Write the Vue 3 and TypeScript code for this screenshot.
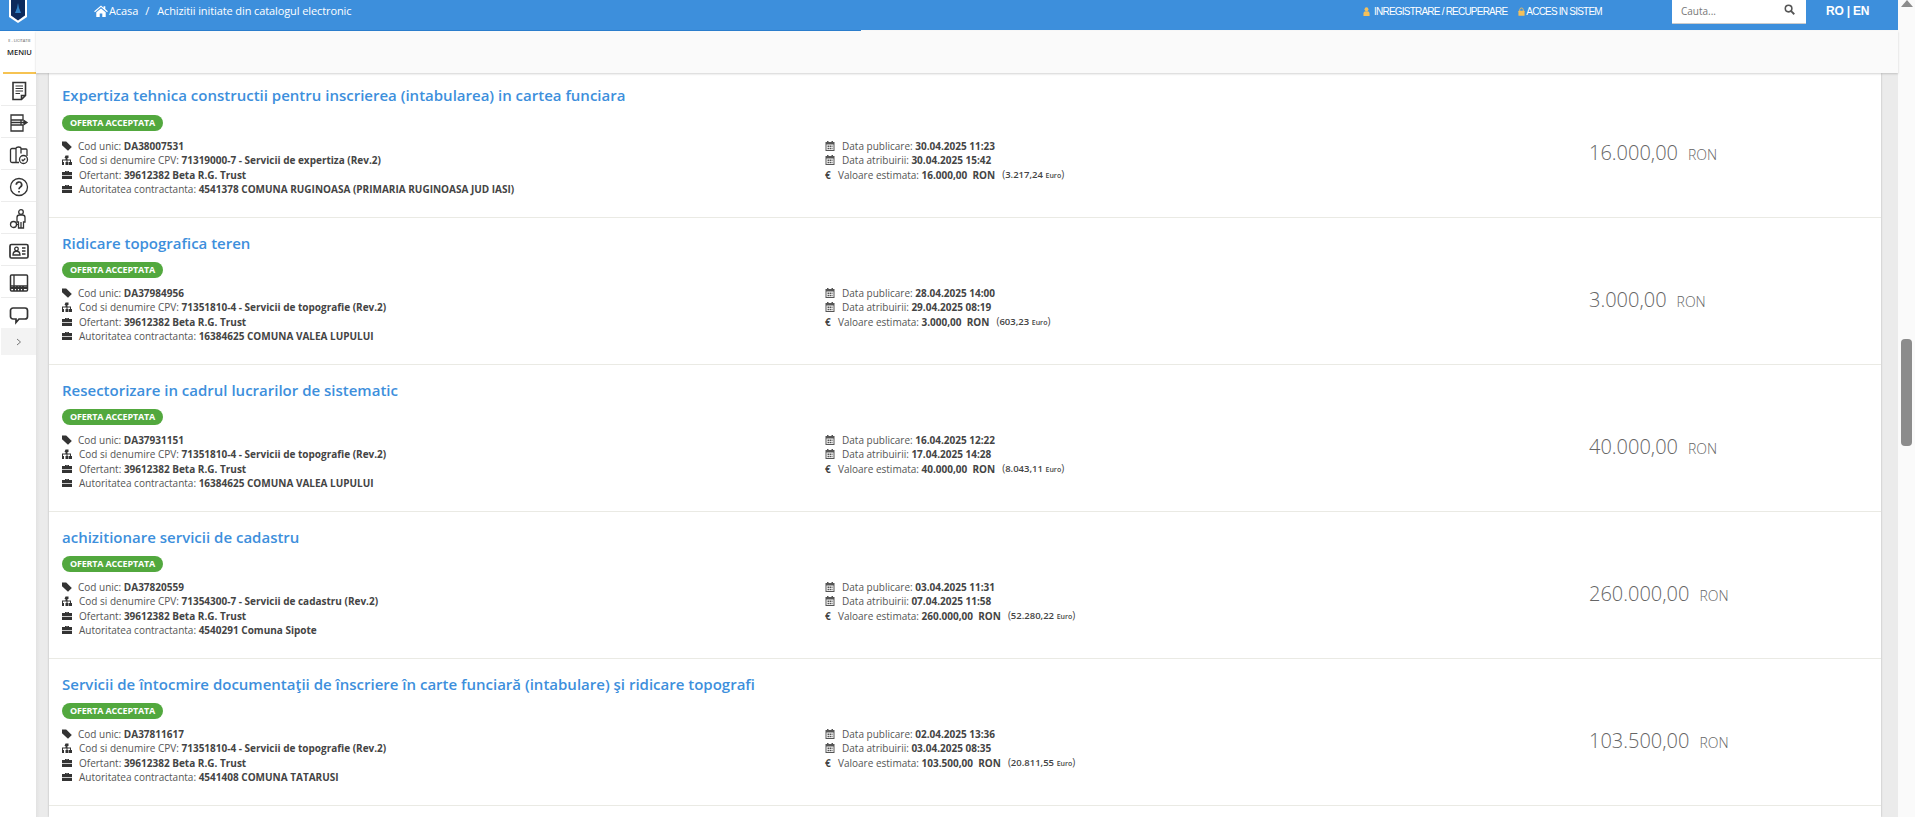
<template>
  <div class="page">
    <div class="main">
      <header class="topbar">
        <div class="logo-wrap">
          <svg class="logo" viewBox="0 0 18 23">
            <path d="M0 0h18v17l-9 6-9-6z" fill="#fff" />
            <path d="M2 0h14v15.6l-7 4.8-7-4.8z" fill="#0d2a5c" />
            <path d="M9 3l1 5 2 5H6l2-5z" fill="#2f7fc4" />
          </svg>
        </div>
        <nav class="crumbs">
          <svg class="home" viewBox="0 0 16 14"><path d="M8 0.500l3 2.600V1.500h2v3.300l3 2.600-.9 1L8 2.400 0.900 8.400 0 7.400zM2.500 8.600L8 4l5.500 4.600V14h-4v-4h-3v4h-4z" fill="#fff" /></svg>
          <span>Acasa</span>
          <span class="sep">/</span>
          <span>Achizitii initiate din catalogul electronic</span>
        </nav>
        <div class="auth">
          <span class="auth-link">
            <svg class="auth-icon" viewBox="0 0 8 10"><circle cx="4" cy="2.400" r="2.200" fill="#f5c05a" /><path d="M0.500 10V7a2.500 2.500 0 0 1 2.500-2.300h2A2.500 2.500 0 0 1 7.500 7v3z" fill="#f5c05a" /></svg>
            INREGISTRARE / RECUPERARE
          </span>
          <span class="auth-link auth-link-lock">
            <svg class="auth-icon" viewBox="0 0 8 10"><path d="M2 4.500V3a2 2 0 0 1 4 0v1.500" fill="none" stroke="#f5c05a" stroke-width="1" /><rect x="0.500" y="4.200" width="7" height="5.600" rx="0.600" fill="#f5c05a" /></svg>
            ACCES IN SISTEM
          </span>
        </div>
        <div class="search">
          <span>Cauta...</span>
          <svg class="search-icon" viewBox="0 0 12 12"><circle cx="5" cy="5" r="3.600" fill="none" stroke="#555" stroke-width="1.700" /><path d="M7.800 7.800l3.400 3.400" stroke="#555" stroke-width="2" /></svg>
        </div>
        <div class="lang">RO | EN</div>
      </header>
      <div class="body">
        <aside class="sidebar">
          <div class="brand">
            <span class="brand-small">E - LICITATIE</span>
            <span class="brand-menu">MENIU</span>
          </div>
          <div class="side-item">
            <svg class="side-icon" viewBox="0 0 20 20"><path d="M4 1.500h12.500v13l-4 4H4zM12.500 18.500v-4h4" stroke-width="1.600" /><path d="M6.500 5h7.500M6.500 7.500h7.500M6.500 10h7.500M6.500 12.500h4.500" stroke-width="1.200" /></svg>
          </div>
          <div class="side-item">
            <svg class="side-icon" viewBox="0 0 20 20"><path d="M2 2h12v5H2zM2 7h10v5H2zM2 12h12v6H2zM2 9.500h14" /><path d="M15 7.500l3 2-3 2z" fill="#333" /></svg>
          </div>
          <div class="side-item">
            <svg class="side-icon" viewBox="0 0 20 20"><path d="M7 3.500H3a1.500 1.500 0 0 0-1.500 1.500v11A1.500 1.500 0 0 0 3 17.500h7M7 3.500v14M7 3.500c0-2 5-2 5 0v5M12 4h5a1 1 0 0 1 1 1v6" /><circle cx="14.500" cy="14.500" r="4" /><path d="M12.700 14.500l1.300 1.400 2.300-2.400" /></svg>
          </div>
          <div class="side-item">
            <svg class="side-icon" viewBox="0 0 20 20"><circle cx="10" cy="10" r="8.500" /><path d="M7.300 7.800a2.700 2.700 0 1 1 4 2.300c-.9.600-1.300 1-1.300 2.200M10 14v1.500" stroke-width="1.700" /></svg>
          </div>
          <div class="side-item">
            <svg class="side-icon" viewBox="0 0 20 20"><circle cx="12" cy="3" r="2.300" /><path d="M8 13V8.500a2.500 2.500 0 0 1 2.500-2.500h3a2.500 2.500 0 0 1 2.500 2.500V13h-1.500v6h-5v-6zM12 13v6" /><circle cx="4.500" cy="15.500" r="3" /><path d="M7.500 15.500H10" /></svg>
          </div>
          <div class="side-item">
            <svg class="side-icon" viewBox="0 0 20 20"><rect x="1" y="3.500" width="18" height="13.500" rx="1.500" stroke-width="1.700" /><circle cx="7.500" cy="8" r="1.800" /><path d="M4 14c0-5 7-5 7 0zM13 7h3.500M13 10h3.500M13 13h3.500" /></svg>
          </div>
          <div class="side-item">
            <svg class="side-icon" viewBox="0 0 20 20"><rect x="1.500" y="2" width="17" height="16" rx="1" stroke-width="1.500" /><path d="M5 2v11M1.500 13h17" /><path d="M2 15h16M5 13v5M8 13v5M11 13v5M14 13v5" stroke-width="1.800" /></svg>
          </div>
          <div class="side-item side-item-last">
            <svg class="side-icon" viewBox="0 0 20 20"><path d="M4 3h12a2.500 2.500 0 0 1 2.500 2.500v6A2.500 2.500 0 0 1 16 14h-6l-3 3.500V14H4a2.500 2.500 0 0 1-2.500-2.500v-6A2.500 2.500 0 0 1 4 3z" stroke-width="1.700" /></svg>
          </div>
          <div class="side-toggle">
            <svg viewBox="0 0 6 8" class="chevron"><path d="M1 1l3.500 3L1 7" fill="none" stroke="#777" stroke-width="1" /></svg>
          </div>
        </aside>
        <div class="content">
          <div class="subbar"></div>
          <div class="gutter">
            <section class="list">
              <article v-for="row in rows" :key="row.code" class="row">
                <h2 class="title">{{ row.title }}</h2>
                <div class="badge">OFERTA ACCEPTATA</div>
                <div class="columns">
                  <div class="col-left">
                    <p class="line">
                      <svg class="ico" viewBox="0 0 10 10"><path d="M0 0.500h4.200L9.800 6 6 9.800 0 4.200z" fill="#333" /></svg>
                      <span class="gap-tag">Cod unic: <b>{{ row.code }}</b></span>
                    </p>
                    <p class="line">
                      <svg class="ico" viewBox="0 0 10 10"><path d="M3.500 0.500h3v2.500h-1v1.500h3.500V7h1v3h-3V7h1V5.500H5.500V7h1v3h-3V7h1V5.500H1V7h1v3h-3V7h1V4.500h3.500V3h-1z" fill="#333" /></svg>
                      <span class="gap">Cod si denumire CPV: <b>{{ row.cpv }}</b></span>
                    </p>
                    <p class="line">
                      <svg class="ico" viewBox="0 0 10 10"><path d="M3 2V1h4v1h3v3H0V2zM4 2h2V1.800H4zM0 5.800h10V9H0z" fill="#333" /></svg>
                      <span class="gap">Ofertant: <b>39612382 Beta R.G. Trust</b></span>
                    </p>
                    <p class="line">
                      <svg class="ico" viewBox="0 0 10 10"><path d="M3 2V1h4v1h3v3H0V2zM4 2h2V1.800H4zM0 5.800h10V9H0z" fill="#333" /></svg>
                      <span class="gap">Autoritatea contractanta: <b>{{ row.authority }}</b></span>
                    </p>
                  </div>
                  <div class="col-mid">
                    <p class="line">
                      <svg class="ico" viewBox="0 0 10 10"><path fill-rule="evenodd" d="M2 0h1.500v1h3V0H8v1h1.500v9H.5V1H2zM1.500 3.500v5.500h7V3.500zM2.500 4.500h1.500v1.500H2.500zM4.500 4.500h1.500v1.500H4.500zM6.500 4.500h1v1.500h-1zM2.500 6.800h1.500v1.500H2.500zM4.500 6.800h1.500v1.500H4.500zM6.500 6.800h1v1.500h-1z" fill="#555" /></svg>
                      <span class="gap-date">Data publicare: <b>{{ row.published }}</b></span>
                    </p>
                    <p class="line">
                      <svg class="ico" viewBox="0 0 10 10"><path fill-rule="evenodd" d="M2 0h1.500v1h3V0H8v1h1.500v9H.5V1H2zM1.500 3.500v5.500h7V3.500zM2.500 4.500h1.500v1.500H2.500zM4.500 4.500h1.500v1.500H4.500zM6.500 4.500h1v1.500h-1zM2.500 6.800h1.500v1.500H2.500zM4.500 6.800h1.500v1.500H4.500zM6.500 6.800h1v1.500h-1z" fill="#555" /></svg>
                      <span class="gap-date">Data atribuirii: <b>{{ row.awarded }}</b></span>
                    </p>
                    <p class="line">
                      <span class="euro">€</span>
                      <span>Valoare estimata: <b>{{ row.value }}&nbsp; RON</b></span>
                      <span class="eur-value">(<b>{{ row.euro }}</b> <small>Euro</small>)</span>
                    </p>
                  </div>
                  <div class="col-price">
                    <span class="price">{{ row.value }}</span>
                    <span class="currency">RON</span>
                  </div>
                </div>
              </article>
            </section>
          </div>
        </div>
      </div>
    </div>
    <div class="scrollbar">
      <div class="arrow"></div>
      <div class="thumb"></div>
    </div>
  </div>
</template>

<script setup lang="ts">
interface OfferRow {
  title: string
  code: string
  cpv: string
  authority: string
  published: string
  awarded: string
  value: string
  euro: string
}

const rows: OfferRow[] = [
  {
    title: 'Expertiza tehnica constructii pentru inscrierea (intabularea) in cartea funciara',
    code: 'DA38007531',
    cpv: '71319000-7 - Servicii de expertiza (Rev.2)',
    authority: '4541378 COMUNA RUGINOASA (PRIMARIA RUGINOASA JUD IASI)',
    published: '30.04.2025 11:23',
    awarded: '30.04.2025 15:42',
    value: '16.000,00',
    euro: '3.217,24',
  },
  {
    title: 'Ridicare topografica teren',
    code: 'DA37984956',
    cpv: '71351810-4 - Servicii de topografie (Rev.2)',
    authority: '16384625 COMUNA VALEA LUPULUI',
    published: '28.04.2025 14:00',
    awarded: '29.04.2025 08:19',
    value: '3.000,00',
    euro: '603,23',
  },
  {
    title: 'Resectorizare in cadrul lucrarilor de sistematic',
    code: 'DA37931151',
    cpv: '71351810-4 - Servicii de topografie (Rev.2)',
    authority: '16384625 COMUNA VALEA LUPULUI',
    published: '16.04.2025 12:22',
    awarded: '17.04.2025 14:28',
    value: '40.000,00',
    euro: '8.043,11',
  },
  {
    title: 'achizitionare servicii de cadastru',
    code: 'DA37820559',
    cpv: '71354300-7 - Servicii de cadastru (Rev.2)',
    authority: '4540291 Comuna Sipote',
    published: '03.04.2025 11:31',
    awarded: '07.04.2025 11:58',
    value: '260.000,00',
    euro: '52.280,22',
  },
  {
    title: 'Servicii de întocmire documentaţii de înscriere în carte funciară (intabulare) şi ridicare topografi',
    code: 'DA37811617',
    cpv: '71351810-4 - Servicii de topografie (Rev.2)',
    authority: '4541408 COMUNA TATARUSI',
    published: '02.04.2025 13:36',
    awarded: '03.04.2025 08:35',
    value: '103.500,00',
    euro: '20.811,55',
  },
]
</script>

<style>
html,
body {
  margin: 0;
  overflow: hidden;
  background: #fafafa;
}
</style>

<style scoped>
.page {
  display: flex;
  width: 1915px;
  height: 817px;
  overflow: hidden;
  font-family: "Open Sans", "Liberation Sans", sans-serif;
  color: #444;
}

.main {
  flex: 1;
  min-width: 0;
  display: flex;
  flex-direction: column;
}

.topbar {
  height: 30px;
  flex: none;
  display: flex;
  align-items: flex-start;
  background: #3d8fdc;
  color: #fff;
  position: relative;
}

.topbar::after {
  content: "";
  position: absolute;
  left: 0;
  top: 30px;
  width: 861px;
  height: 1px;
  background: #2c7fcf;
}

.logo-wrap {
  width: 94px;
  padding-left: 9px;
  box-sizing: border-box;
}

.logo {
  display: block;
  width: 18px;
  height: 23px;
}

.crumbs {
  display: flex;
  align-items: center;
  width: 1269px;
  height: 21px;
  font-size: 11px;
  letter-spacing: -0.1px;
}

.home {
  width: 14px;
  height: 12px;
  margin-right: 1px;
}

.sep {
  margin: 0 8px 0 7px;
}

.auth {
  display: flex;
  gap: 11px;
  width: 309px;
  height: 22px;
  align-items: center;
  font-family: "Liberation Sans", sans-serif;
  font-size: 10px;
  letter-spacing: -0.78px;
  white-space: nowrap;
}

.auth-link {
  display: flex;
  align-items: center;
  gap: 4px;
}

.auth-link-lock {
  gap: 1px;
}

.auth-icon {
  width: 7px;
  height: 9px;
}

.search {
  width: 134px;
  height: 24px;
  box-sizing: border-box;
  background: #fff;
  border-bottom: 1px solid #ccc;
  color: #777;
  font-size: 10px;
  display: flex;
  align-items: center;
  justify-content: space-between;
  padding: 0 11px 2px 9px;
}

.search-icon {
  width: 11px;
  height: 11px;
  margin-top: -3px;
}

.lang {
  margin-left: 20px;
  margin-top: 4px;
  font-family: "Liberation Sans", sans-serif;
  font-weight: 700;
  font-size: 12px;
  letter-spacing: -0.2px;
}

.body {
  flex: 1;
  min-height: 0;
  display: flex;
}

.sidebar {
  width: 36px;
  flex: none;
  padding-left: 1px;
  box-sizing: border-box;
  background: #fff;
  display: flex;
  flex-direction: column;
  align-items: stretch;
}

.brand {
  height: 44px;
  box-sizing: border-box;
  margin: 0 0 0 2px;
  border-bottom: 2px solid #f6c352;
  display: flex;
  flex-direction: column;
  align-items: center;
  padding-top: 8px;
}

.brand-small {
  font-size: 4px;
  line-height: 5px;
  color: #555;
  white-space: nowrap;
}

.brand-menu {
  font-size: 7.500px;
  font-weight: 600;
  line-height: 10px;
  margin-top: 4px;
  color: #222;
}

.side-item {
  height: 32px;
  box-sizing: border-box;
  padding-top: 3px;
  border-bottom: 1px solid #ececec;
  display: flex;
  align-items: center;
  justify-content: center;
}

.side-item-last {
  height: 30px;
  border-bottom: none;
}

.side-icon {
  width: 20px;
  height: 20px;
  fill: none;
  stroke: #333;
  stroke-width: 1.300;
}

.side-toggle {
  height: 27px;
  background: #f3f3f3;
  display: flex;
  align-items: center;
  justify-content: center;
}

.chevron {
  width: 6px;
  height: 8px;
}

.content {
  flex: 1;
  min-width: 0;
  display: flex;
  flex-direction: column;
}

.subbar {
  height: 42px;
  flex: none;
  background: #fafafa;
  margin-top: 1px;
  box-shadow: 0 1px 2px rgba(0, 0, 0, 0.18);
  position: relative;
}

.gutter {
  flex: 1;
  min-height: 0;
  background: linear-gradient(90deg, #e2e2e2 0, #ebebeb 4px);
  padding: 0 17px 0 13px;
}

.list {
  height: 100%;
  background: #fff;
  box-shadow: 0 0 2px rgba(0, 0, 0, 0.25);
  overflow: hidden;
}

.row {
  height: 147px;
  box-sizing: border-box;
  border-bottom: 1px solid #eaeae4;
  padding: 14px 13px 0;
}

.row:first-child {
  height: 145px;
  padding-top: 11px;
}

.title {
  margin: 0;
  font-size: 15px;
  line-height: 22px;
  font-weight: 600;
  color: #3d8fdc;
  white-space: nowrap;
}

.badge {
  width: 101px;
  height: 16px;
  margin-top: 9px;
  border-radius: 8px;
  background: #52a83e;
  color: #fff;
  font-size: 9px;
  font-weight: 700;
  line-height: 16px;
  text-align: center;
  letter-spacing: -0.2px;
}

.row:not(:first-child) .badge {
  margin-top: 8px;
}

.columns {
  display: flex;
  margin-top: 8px;
}

.col-left {
  width: 763px;
  flex: none;
}

.col-mid {
  width: 764px;
  flex: none;
}

.col-price {
  color: #666;
  white-space: nowrap;
  display: flex;
  align-items: baseline;
  gap: 10px;
}

.price {
  font-size: 20px;
  font-weight: 300;
  line-height: 28px;
}

.currency {
  font-size: 14px;
  font-weight: 300;
}

.line {
  margin: 0;
  height: 14.300px;
  line-height: 14.300px;
  font-size: 10px;
  color: #555;
  display: flex;
  align-items: center;
  white-space: nowrap;
}

.line b {
  font-weight: 700;
  color: #444;
}

.ico {
  width: 10px;
  height: 10px;
  flex: none;
}

.gap-tag {
  margin-left: 6px;
}

.gap,
.gap-date {
  margin-left: 7px;
}

.euro {
  width: 13px;
  flex: none;
  font-weight: 700;
  color: #444;
}

.eur-value {
  margin-left: 7px;
  color: #444;
}

.eur-value b {
  font-weight: 600;
  font-size: 9.500px;
}

.eur-value small {
  font-size: 7px;
  font-weight: 600;
}

.scrollbar {
  width: 17px;
  flex: none;
  background: #fafafa;
  display: flex;
  flex-direction: column;
  align-items: center;
}

.arrow {
  width: 0;
  height: 0;
  border-left: 6px solid transparent;
  border-right: 6px solid transparent;
  border-bottom: 7px solid #8c8c8c;
}

.thumb {
  width: 11px;
  height: 107px;
  margin-top: 332px;
  border-radius: 4px;
  background: #8c8c8c;
}
</style>
